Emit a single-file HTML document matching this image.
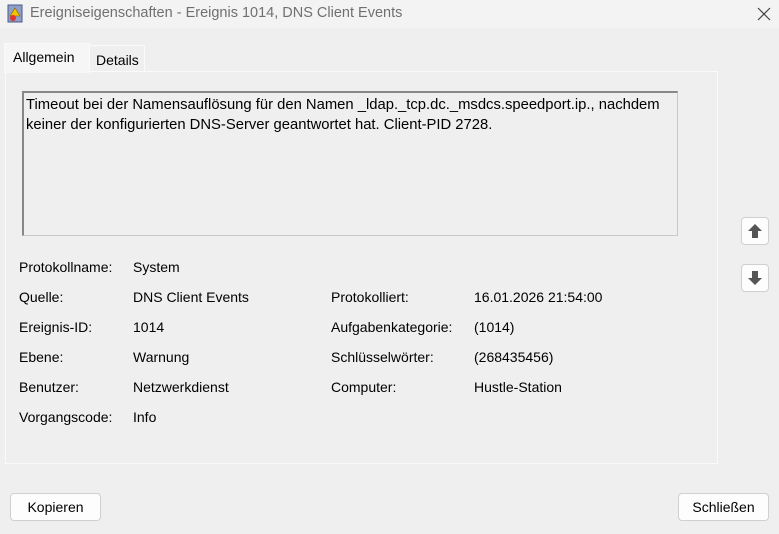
<!DOCTYPE html><html><head><style>
body{margin:0;width:779px;height:534px;background:#efefef;font-family:"Liberation Sans",sans-serif;font-size:14px;color:#000;position:relative;overflow:hidden}
.a{position:absolute;white-space:nowrap}
.btn{position:absolute;background:#fdfdfd;border:1px solid #d0d0d0;border-radius:4px;box-sizing:border-box;text-align:center;line-height:26px}
</style></head><body>
<div class="a" style="left:0;top:0;width:779px;height:28px;background:#f3f3f3"></div>
<svg class="a" style="left:6px;top:4px" width="18" height="20"><rect x="2" y="1" width="14" height="17" fill="#8fa0c8" stroke="#4a5a8a"/><polygon points="9,4 14,12 4,12" fill="#f5c400" stroke="#7a6000" stroke-width=".6"/><circle cx="7" cy="14" r="3" fill="#d33"/></svg>
<div class="a" style="left:30px;top:5px;color:#707070;font-size:14.5px">Ereigniseigenschaften - Ereignis 1014, DNS Client Events</div>
<svg class="a" style="left:757px;top:7px" width="14" height="14"><path d="M1 1L13 13M13 1L1 13" stroke="#444" stroke-width="1.2"/></svg>
<div class="a" style="left:5px;top:71px;width:711px;height:391px;border:1px solid #fafafa"></div>
<div class="a" style="left:4px;top:43px;width:84px;height:29px;background:#f6f6f6;border:1px solid #fafafa;border-bottom:none"></div>
<div class="a" style="left:13px;top:49px">Allgemein</div>
<div class="a" style="left:89px;top:45px;width:54px;height:26px;border:1px solid #fafafa;border-bottom:none"></div>
<div class="a" style="left:96px;top:52px">Details</div>
<div class="a" style="left:22px;top:91px;width:653px;height:142px;border:1px solid #c8c8c8;border-top:2px solid #888;border-left:2px solid #888"></div>
<div class="a" style="left:26px;top:95px;line-height:20px;font-size:14.8px">Timeout bei der Namensauflösung für den Namen _ldap._tcp.dc._msdcs.speedport.ip., nachdem<br>keiner der konfigurierten DNS-Server geantwortet hat. Client-PID 2728.</div>
<div class="a" style="left:19px;top:252px;line-height:30px">Protokollname:<br>Quelle:<br>Ereignis-ID:<br>Ebene:<br>Benutzer:<br>Vorgangscode:</div>
<div class="a" style="left:133px;top:252px;line-height:30px">System<br>DNS Client Events<br>1014<br>Warnung<br>Netzwerkdienst<br>Info</div>
<div class="a" style="left:331px;top:282px;line-height:30px">Protokolliert:<br>Aufgabenkategorie:<br>Schlüsselwörter:<br>Computer:</div>
<div class="a" style="left:474px;top:282px;line-height:30px">16.01.2026 21:54:00<br>(1014)<br>(268435456)<br>Hustle-Station</div>
<div class="btn" style="left:741px;top:217px;width:28px;height:28px"></div>
<svg class="a" style="left:747px;top:223px" width="16" height="16"><path d="M8 1 L15 8 L11 8 L11 15 L5 15 L5 8 L1 8 Z" fill="#555"/></svg>
<div class="btn" style="left:741px;top:264px;width:28px;height:28px"></div>
<svg class="a" style="left:747px;top:270px" width="16" height="16"><path d="M8 15 L15 8 L11 8 L11 1 L5 1 L5 8 L1 8 Z" fill="#555"/></svg>
<div class="btn" style="left:10px;top:493px;width:91px;height:28px">Kopieren</div>
<div class="btn" style="left:678px;top:493px;width:91px;height:28px">Schließen</div>
</body></html>
